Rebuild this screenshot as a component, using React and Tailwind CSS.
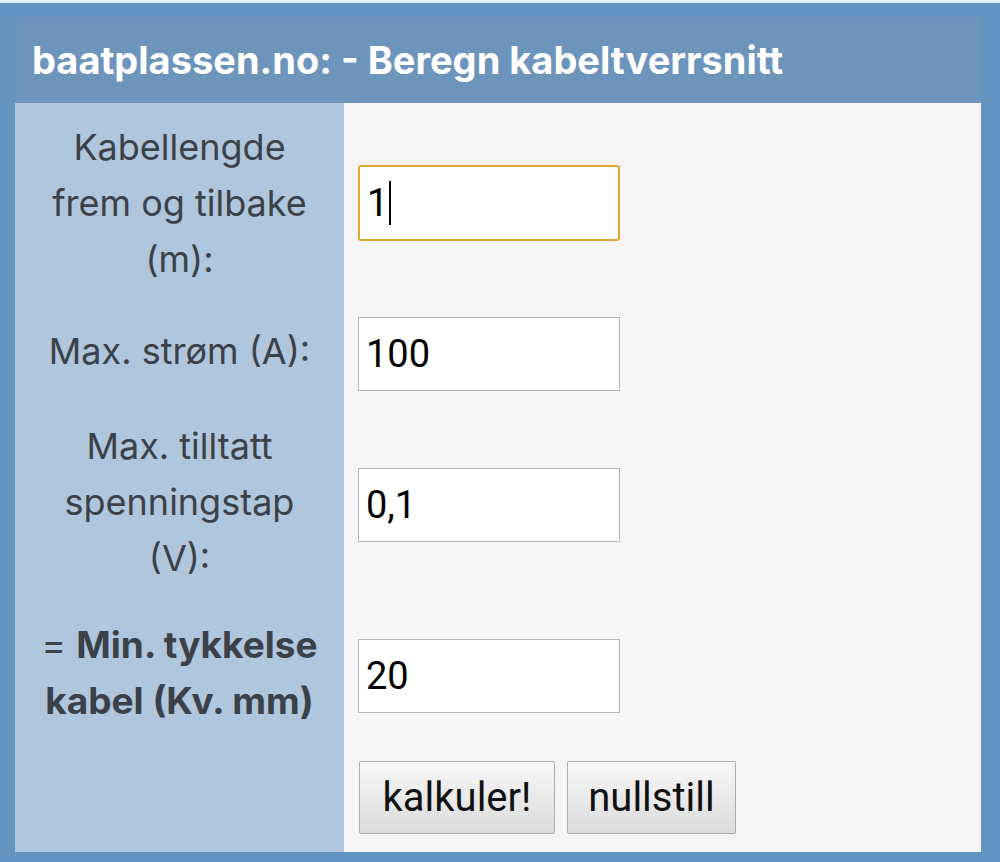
export default function App() {
  const labelCell = "bg-[#afc6dd] flex items-center justify-center text-center px-5";
  const fieldCell = "bg-[#f5f5f5] flex items-center pl-[14px] pt-[6px]";
  const field =
    "w-[262px] h-[74px] bg-white border border-[#b5b5b5] flex items-center pl-[7px] text-[38px] text-black font-['Roboto',sans-serif]";

  return (
    <div className="w-[1000px] h-[862px] bg-[#e3edf6] pt-[3px] overflow-hidden">
      <div className="h-[859px] bg-[#6194c1] pl-[15px] pr-[19px] pt-[14px] pb-[10px] flex flex-col">
        {/* header */}
        <div className="h-[86px] bg-[#6d95bb] flex items-center pl-[17px] text-white font-bold text-[38px] font-['Inter',sans-serif]">
          baatplassen.no: - Beregn kabeltverrsnitt
        </div>

        <div className="flex-1 grid grid-cols-[329px_1fr] grid-rows-[199px_97px_205px_137px_1fr] text-[36px] leading-[56px] text-[#3a4148] font-['Inter',sans-serif]">
          <div className={labelCell}>
            Kabellengde frem og tilbake (m):
          </div>
          <div className="bg-[#f5f5f5] flex items-center pl-[14px]">
            <div className={`${field} h-[76px] border-2 border-[#e2a733] rounded-[3px] pl-[6px]`}>
              1<span className="inline-block w-[2px] h-[44px] bg-black ml-[1px]" />
            </div>
          </div>

          <div className={labelCell}>Max. strøm (A):</div>
          <div className={fieldCell}>
            <div className={field}>100</div>
          </div>

          <div className={labelCell}>Max. tilltatt spenningstap (V):</div>
          <div className={fieldCell}>
            <div className={field}>0,1</div>
          </div>

          <div className="bg-[#afc6dd] flex items-center justify-center text-center px-3 text-[37px]">
            <span>
              = <b className="font-bold">Min. tykkelse kabel (Kv. mm)</b>
            </span>
          </div>
          <div className={fieldCell}>
            <div className={field}>20</div>
          </div>

          <div className="bg-[#afc6dd]" />
          <div className="bg-[#f5f5f5] flex items-start pl-[15px] pt-[20px] gap-[12px] font-['Roboto',sans-serif] text-[40px] text-[#111]">
            <button className="w-[196px] h-[73px] border border-[#ababab] rounded-[2px] bg-gradient-to-b from-[#f7f7f7] to-[#dcdcdc]">
              kalkuler!
            </button>
            <button className="w-[169px] h-[73px] border border-[#ababab] rounded-[2px] bg-gradient-to-b from-[#f7f7f7] to-[#dcdcdc]">
              nullstill
            </button>
          </div>
        </div>
      </div>
    </div>
  );
}
